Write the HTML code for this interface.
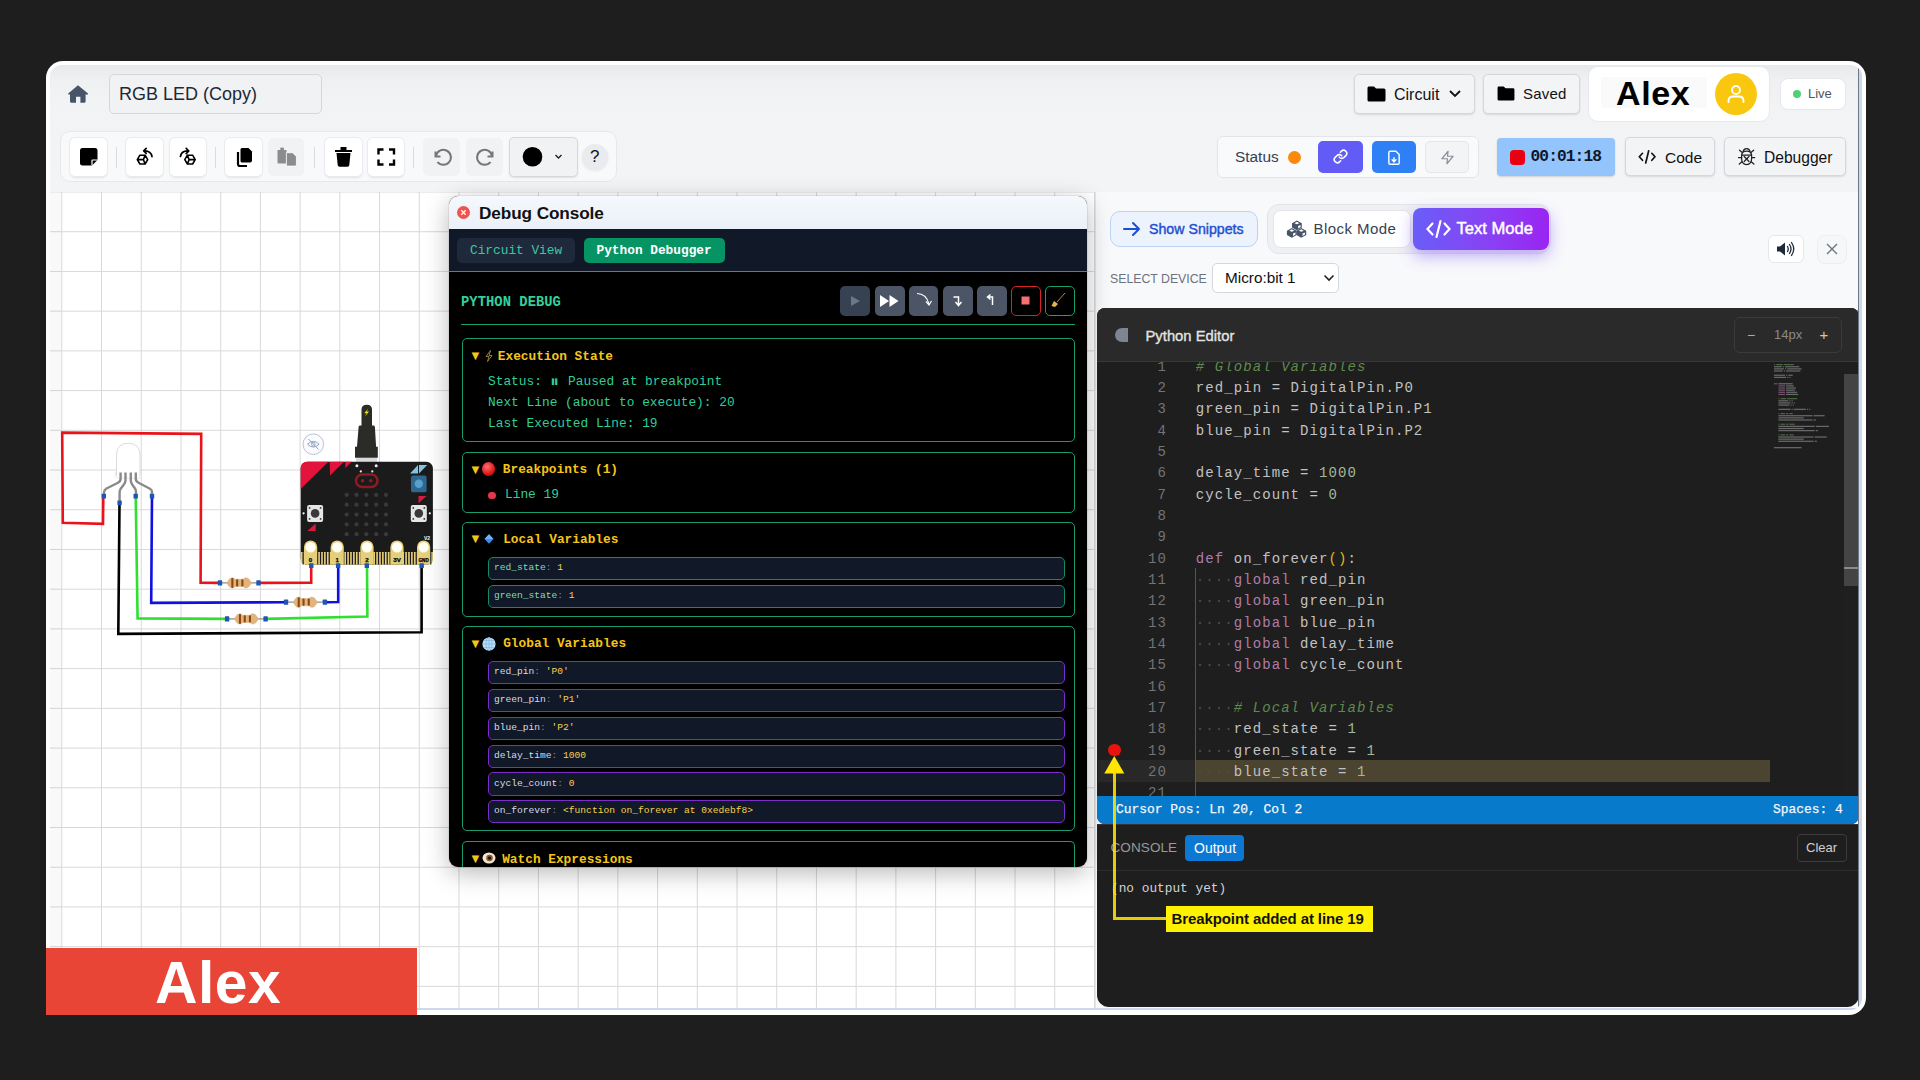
<!DOCTYPE html>
<html><head><meta charset="utf-8">
<style>
*{box-sizing:border-box;margin:0;padding:0}
html,body{width:1920px;height:1080px;overflow:hidden;background:#1e1e1e;font-family:"Liberation Sans",sans-serif}
.a{position:absolute}
.mono{font-family:"Liberation Mono",monospace}
#frame{left:46px;top:61px;width:1820px;height:954px;background:#fff;border-radius:17px}
#app{left:0;top:0;width:1920px;height:1080px;clip-path:inset(65px 58px 70px 50px round 12px 12px 12px 12px);background:#f0f1f3}
#hdr{left:50px;top:65px;width:1812px;height:127.5px;background:linear-gradient(#e8e9eb,#eff0f2 14px,#f2f3f5 40px,#f3f4f5);border-bottom:1.5px solid #cdd0d4}
.btn{position:absolute;background:#f3f4f6;border:1px solid #d4d7dc;border-radius:5px;box-shadow:0 1px 2px rgba(0,0,0,.12)}
.tb{position:absolute;background:#fff;border-radius:5px;box-shadow:0 0 0 1px #e9ebee,0 1.5px 2px rgba(0,0,0,.09)}
.sep{position:absolute;width:1px;height:21px;background:#d9dce1}
#canvas{left:50px;top:192px;width:1045px;height:818px;background-color:#fff;
 background-image:linear-gradient(to right,#d8d8d8 1.2px,transparent 1.2px),linear-gradient(to bottom,#d8d8d8 1.2px,transparent 1.2px);
 background-size:39.73px 39.73px;background-position:11.3px -0.5px}
#rp{left:1095px;top:192px;width:764px;height:818px;background:#f8f9fb;border-left:1px solid #e3e5e8}
.ln{position:absolute;left:1097px;width:70px;text-align:right;font:14px/21.33px "Liberation Mono",monospace;letter-spacing:1.08px;color:#737373}
.cl{position:absolute;left:1195.8px;font:14px/21.33px "Liberation Mono",monospace;letter-spacing:1.08px;color:#c2c2c2;white-space:pre}
.tc{color:#5f8a4d;font-style:italic}.tk{color:#ad7daa}.ty{color:#dcb81a}.td{color:#4d4d4d}.tn{color:#a3b99a}
.box{position:absolute;left:462px;width:613px;border:1.5px solid #199a70;border-radius:5px}
.tt{position:absolute;left:470px;font:700 12.8px/18px "Liberation Mono",monospace;color:#f5c518;white-space:pre}
.tri{font-size:13px;color:#f5c518;display:inline-block;width:14px}
.emo{position:absolute;border-radius:50%}
.st{position:absolute;left:488px;font:12.85px/17px "Liberation Mono",monospace;color:#2fcf9a;white-space:pre}
.vb{position:absolute;left:488px;width:577px;height:23.5px;background:#111827;border-radius:5px}
.vb.g{border:1.7px solid #168a64}.vb.p{border:1.8px solid #7b2dcc}
.vt{position:absolute;left:494px;font:9.6px/14px "Liberation Mono",monospace;white-space:pre}
.vn{color:#86dbb4}.vg{color:#dcd8e6}.vc{color:#7c8594}.vv{color:#f7d24a}
</style></head><body>
<div id="frame" class="a"></div>
<div id="app" class="a">
  <div id="hdr" class="a"></div>

  <!-- HEADER ROW 1 -->
  <svg class="a" style="left:0;top:0" width="1920" height="200" viewBox="0 0 1920 200">
    <path d="M78,85.3 L88,93.6 L88,94.6 L85.6,94.6 L85.6,101.6 Q85.6,102.7 84.5,102.7 L80.4,102.7 L80.4,96.8 L76,96.8 L76,102.7 L71.1,102.7 Q70,102.7 70,101.6 L70,94.6 L68.2,94.6 L68.2,93.6 Z" fill="#475569"/>
  </svg>
  <div class="a" style="left:109px;top:74px;width:213px;height:40px;background:#f1f2f4;border:1px solid #d3d6db;border-radius:5px"></div>
  <div class="a" style="left:119px;top:82px;font-size:18px;line-height:24px;color:#1f2937">RGB LED (Copy)</div>

  <div class="btn" style="left:1354px;top:74px;width:121px;height:40px"></div>
  <svg class="a" style="left:1367px;top:86px" width="19" height="16" viewBox="0 0 19 16"><path d="M1.5,0.5 H7 L9,2.5 H17 Q18.5,2.5 18.5,4 V14 Q18.5,15.5 17,15.5 H2 Q0.5,15.5 0.5,14 V2 Q0.5,0.5 1.5,0.5Z" fill="#000"/></svg>
  <div class="a" style="left:1394px;top:85px;font-size:16px;line-height:20px;color:#111">Circuit</div>
  <svg class="a" style="left:1449px;top:89px" width="12" height="9" viewBox="0 0 12 9"><path d="M1,2 L6,7 L11,2" stroke="#111" stroke-width="1.8" fill="none"/></svg>

  <div class="btn" style="left:1483px;top:74px;width:97px;height:40px"></div>
  <svg class="a" style="left:1497px;top:86px" width="18" height="15" viewBox="0 0 19 16"><path d="M1.5,0.5 H7 L9,2.5 H17 Q18.5,2.5 18.5,4 V14 Q18.5,15.5 17,15.5 H2 Q0.5,15.5 0.5,14 V2 Q0.5,0.5 1.5,0.5Z" fill="#000"/></svg>
  <div class="a" style="left:1523px;top:84px;font-size:15px;line-height:20px;color:#111;letter-spacing:0.2px">Saved</div>

  <div class="a" style="left:1588px;top:66px;width:182px;height:56px;background:#fff;border:1px solid #e6e8eb;border-radius:10px"></div>
  <div class="a" style="left:1601px;top:77px;width:106px;height:31px;background:#fafafa"></div>
  <div class="a" style="left:1616px;top:73px;font-size:34px;line-height:40px;font-weight:700;color:#000;letter-spacing:0.6px">Alex</div>
  <div class="a" style="left:1715px;top:73px;width:42px;height:42px;border-radius:50%;background:#f9c80e"></div>
  <svg class="a" style="left:1724px;top:82px" width="24" height="24" viewBox="0 0 24 24"><circle cx="12" cy="8" r="4" stroke="#fff" stroke-width="1.8" fill="none"/><path d="M4.5,20 V19 Q4.5,14.5 9,14.5 H15 Q19.5,14.5 19.5,19 V20" stroke="#fff" stroke-width="1.8" fill="none" stroke-linecap="round"/></svg>

  <div class="a" style="left:1780px;top:78px;width:66px;height:32px;background:#fff;border:1px solid #e5e7eb;border-radius:8px"></div>
  <div class="a" style="left:1793px;top:90px;width:8px;height:8px;border-radius:50%;background:#4fd07a"></div>
  <div class="a" style="left:1808px;top:86px;font-size:13px;line-height:16px;color:#4b5563">Live</div>

  <!-- TOOLBAR -->
  <div class="a" style="left:60px;top:131px;width:557px;height:51px;background:#f8f9fa;border:1px solid #e6e8eb;border-radius:10px"></div>
  <div class="tb" style="left:70px;top:138px;width:37px;height:38px"></div>
  <div class="sep" style="left:116px;top:147px"></div>
  <div class="tb" style="left:126px;top:138px;width:37px;height:38px"></div>
  <div class="tb" style="left:170px;top:138px;width:36px;height:38px"></div>
  <div class="sep" style="left:215px;top:147px"></div>
  <div class="tb" style="left:225px;top:138px;width:37px;height:38px"></div>
  <div class="a" style="left:268px;top:138px;width:36px;height:38px;background:#f1f2f4;border-radius:5px"></div>
  <div class="sep" style="left:314px;top:147px"></div>
  <div class="tb" style="left:325px;top:138px;width:37px;height:38px"></div>
  <div class="tb" style="left:368px;top:138px;width:36px;height:38px"></div>
  <div class="sep" style="left:413px;top:147px"></div>
  <div class="a" style="left:423px;top:138px;width:37px;height:38px;background:#f1f2f4;border-radius:5px"></div>
  <div class="a" style="left:466px;top:138px;width:37px;height:38px;background:#f1f2f4;border-radius:5px"></div>
  <div class="a" style="left:509px;top:137px;width:69px;height:40px;background:#f1f2f4;border:1px solid #d5d8dd;border-radius:5px;box-shadow:0 1px 2px rgba(0,0,0,.1)"></div>
  <div class="a" style="left:582px;top:144px;width:26px;height:26px;border-radius:50%;background:#e9ebee;box-shadow:0 1px 3px rgba(0,0,0,.08)"></div>
  <svg class="a" style="left:0;top:120px" width="640" height="80" viewBox="0 120 640 80">
    <!-- sticky note -->
    <path d="M82.5,148 H95 Q97.5,148 97.5,150.5 V160 L92,165.5 H82.5 Q80,165.5 80,163 V150.5 Q80,148 82.5,148Z" fill="#000"/>
    <path d="M97.5,160 L92.5,160 Q92,160 92,160.5 V165.5" stroke="#fff" stroke-width="1.2" fill="none"/>
    <!-- rotate left -->
    <g stroke="#000" stroke-width="1.6" fill="none" stroke-linejoin="round" stroke-linecap="round">
      <path d="M137.3,159.6 L139.9,155.2 L145.1,155.2 L147.7,159.6 L145.1,164.0 L139.9,164.0Z M137.3,159.6 L143.4,159.6 L145.1,155.2 M143.4,159.6 L145.1,164.0"/>
      <path d="M152,156.7 Q151,150.6 144,150.9 M146.2,148.4 L143.7,150.9 L146.2,153.4" stroke-width="1.7"/>
      <path d="M184.8,159.6 L187.4,155.2 L192.6,155.2 L195.2,159.6 L192.6,164.0 L187.4,164.0Z M195.2,159.6 L189.1,159.6 L187.4,155.2 M189.1,159.6 L187.4,164.0"/>
      <path d="M180.4,156.5 Q181.5,150.6 188.5,151 M186.2,148.4 L188.8,151 L186.2,153.6" stroke-width="1.7"/>
    </g>
    <!-- copy -->
    <path d="M238,152 V164 Q238,166 240,166 H247" stroke="#000" stroke-width="2.2" fill="none"/>
    <path d="M242,148 H248.5 L252,151.5 V160.5 Q252,162.5 250,162.5 H242 Q240.5,162.5 240.5,161 V149.5 Q240.5,148 242,148Z" fill="#000"/>
    <!-- paste disabled -->
    <path d="M277.5,150 H286.5 V163.6 H278.5 Q277.5,163.6 277.5,162.6Z" fill="#8c8c8c"/>
    <rect x="280.3" y="147.6" width="3.6" height="3.2" rx="1" fill="#8c8c8c"/>
    <path d="M286.4,152.7 H292.6 L296.4,156.5 V165 Q296.4,166.1 295.3,166.1 H287.5 Q286.4,166.1 286.4,165Z" fill="#8c8c8c" stroke="#fff" stroke-width="0.8"/>
    <!-- trash -->
    <path d="M335,150 H352 V152 H335Z M340.5,147 H346.5 V150 H340.5Z" fill="#000"/>
    <path d="M336.5,153 H350.5 L349.3,165 Q349.1,166.7 347.5,166.7 H339.5 Q337.9,166.7 337.7,165Z" fill="#000"/>
    <!-- fullscreen -->
    <path d="M378.5,154.5 V149.5 H383.5 M389,149.5 H394 V154.5 M394,159.5 V164.5 H389 M383.5,164.5 H378.5 V159.5" stroke="#000" stroke-width="2.4" fill="none"/>
    <!-- undo -->
    <path d="M435.5,151.5 V156.5 H440.5" stroke="#777" stroke-width="2" fill="none"/>
    <path d="M436,156 A7.5,7.5 0 1 1 437.5,162" stroke="#777" stroke-width="2" fill="none"/>
    <!-- redo -->
    <path d="M492.5,151.5 V156.5 H487.5" stroke="#777" stroke-width="2" fill="none"/>
    <path d="M492,156 A7.5,7.5 0 1 0 490.5,162" stroke="#777" stroke-width="2" fill="none"/>
    <!-- color -->
    <circle cx="532.5" cy="156.7" r="9.8" fill="#000"/>
    <path d="M555.5,155 L558.5,158 L561.5,155" stroke="#222" stroke-width="1.4" fill="none"/>
  </svg>
  <div class="a" style="left:590px;top:147px;font-size:17px;line-height:20px;color:#111">?</div>

  <!-- HEADER ROW 2 -->
  <div class="btn" style="left:1625px;top:137px;width:90px;height:39px"></div>
  <div class="btn" style="left:1724px;top:137px;width:122px;height:39px"></div>
  <div class="a" style="left:1217px;top:136px;width:262px;height:42px;background:#f9fafb;border:1px solid #e3e5e9;border-radius:6px"></div>
  <div class="a" style="left:1235px;top:147px;font-size:15.4px;line-height:20px;color:#374151">Status</div>
  <div class="a" style="left:1288px;top:150.5px;width:13px;height:13px;border-radius:50%;background:#fb8a0a"></div>
  <div class="a" style="left:1318px;top:141px;width:45px;height:32px;border-radius:5px;background:#635bf6"></div>
  <div class="a" style="left:1372px;top:141px;width:44px;height:32px;border-radius:5px;background:#2f80f7"></div>
  <div class="a" style="left:1425px;top:141px;width:44px;height:32px;border-radius:5px;background:#f3f4f6;border:1px solid #e5e7eb"></div>
  <svg class="a" style="left:0;top:120px" width="1920" height="80" viewBox="0 120 1920 80">
    <!-- code icon -->
    <path d="M1642.5,153.3 L1639.3,156.8 L1642.5,160.3 M1651.8,153.3 L1655,156.8 L1651.8,160.3 M1648.7,150.8 L1645.7,163" stroke="#111" stroke-width="1.7" fill="none" stroke-linecap="round" stroke-linejoin="round"/>
    <!-- bug icon -->
    <g stroke="#222" stroke-width="1.25" fill="none" stroke-linecap="round">
      <path d="M1741.8,155 Q1741.8,151 1746.6,151 Q1751.4,151 1751.4,155"/>
      <path d="M1743.2,151.6 Q1743.5,148.5 1746.6,148.5 Q1749.7,148.5 1750,151.6"/>
      <path d="M1741.6,155 H1751.6 V158.5 Q1751.6,164.5 1746.6,164.5 Q1741.6,164.5 1741.6,158.5Z"/>
      <path d="M1744.2,156.5 L1749,161.5 M1749,156.5 L1744.2,161.5"/>
      <path d="M1741.6,157.5 H1738.5 M1751.6,157.5 H1754.7 M1742,161.8 L1739.3,164 M1751.2,161.8 L1753.9,164 M1742.3,152.5 L1739.5,150.2 M1750.9,152.5 L1753.7,150.2"/>
    </g>
  </svg>
  <svg class="a" style="left:1333.3px;top:149.3px" width="15" height="15" viewBox="0 0 24 24"><g stroke="#fff" stroke-width="2.5" fill="none" stroke-linecap="round" stroke-linejoin="round"><path d="M10 13a5 5 0 0 0 7.54.54l3-3a5 5 0 0 0-7.07-7.07l-1.72 1.71"/><path d="M14 11a5 5 0 0 0-7.54-.54l-3 3a5 5 0 0 0 7.07 7.07l1.71-1.71"/></g></svg>
  <svg class="a" style="left:1385.5px;top:150px" width="16" height="15.5" viewBox="0 0 24 24"><g stroke="#fff" stroke-width="2.2" fill="none" stroke-linecap="round" stroke-linejoin="round"><path d="M15 2H6a2 2 0 0 0-2 2v16a2 2 0 0 0 2 2h12a2 2 0 0 0 2-2V7Z"/><path d="M12 18v-6"/><path d="m9 15 3 3 3-3"/></g></svg>
  <svg class="a" style="left:1439.5px;top:149.5px" width="15" height="15" viewBox="0 0 24 24"><polygon points="13 2 3 14 12 14 11 22 21 10 12 10 13 2" stroke="#8a8f98" stroke-width="1.9" fill="none" stroke-linejoin="round"/></svg>
  <div class="a" style="left:1497px;top:138px;width:118px;height:38px;border-radius:4px;background:#93c4fb;box-shadow:0 1px 2px rgba(0,0,0,.15)"></div>
  <div class="a" style="left:1510px;top:150px;width:15px;height:15px;border-radius:4px;background:#e80012"></div>
  <div class="a mono" style="left:1530.5px;top:146.5px;font-size:16.2px;line-height:20px;font-weight:700;color:#0f172a;letter-spacing:-0.9px">00:01:18</div>
  <div class="a" style="left:1665px;top:147.5px;font-size:15.5px;line-height:20px;color:#111">Code</div>
  <div class="a" style="left:1764px;top:148px;font-size:15.6px;line-height:20px;color:#111">Debugger</div>
  <div id="canvas" class="a"></div>
  <div class="a" style="left:50px;top:193px;width:11px;height:817px;background:rgba(0,0,0,.025)"></div>
  <div id="rp" class="a"></div>


  <!-- CIRCUIT -->
  <svg class="a" style="left:0;top:0" width="460" height="660" viewBox="0 0 460 660">
<polyline points="103.3,496 103,523.8 62.8,522.7 62.2,432.6 201.2,433.9 200.6,582.8 220,582.9" stroke="#e8141a" fill="none" stroke-width="2.6" stroke-linejoin="miter"/>
<polyline points="258.5,582.9 311.2,582.6 311.2,565.7" stroke="#e8141a" fill="none" stroke-width="2.6" stroke-linejoin="miter"/>
<polyline points="152,496 151.2,602.9 286,602.2" stroke="#1010e0" fill="none" stroke-width="2.6" stroke-linejoin="miter"/>
<polyline points="324.9,602.2 338.2,602 338.2,565.7" stroke="#1010e0" fill="none" stroke-width="2.6" stroke-linejoin="miter"/>
<polyline points="135.7,496 137.6,618.4 227.1,618.9" stroke="#30e030" fill="none" stroke-width="2.6" stroke-linejoin="miter"/>
<polyline points="265.6,618.9 367.4,616.6 367,566" stroke="#30e030" fill="none" stroke-width="2.6" stroke-linejoin="miter"/>
<polyline points="119.5,503 118.3,633.9 421.6,632.2 421.6,566" stroke="#000" fill="none" stroke-width="2.6" stroke-linejoin="miter"/>
<path d="M220,582.9 H258.5" stroke="#8c8c8c" stroke-width="1.3"/><path d="M226.6,582.9 L229.6,578.6999999999999 Q231.1,577.6 233.1,577.8 L235.1,579.3 H243.1 L245.1,577.8 Q247.1,577.6 248.6,578.6999999999999 L251.6,582.9 L248.6,587.1 Q247.1,588.1999999999999 245.1,588.0 L243.1,586.5 H235.1 L233.1,588.0 Q231.1,588.1999999999999 229.6,587.1Z" fill="#e0b47c" stroke="#e0b47c" stroke-width="0.6" stroke-linejoin="round"/><rect x="231.29999999999998" y="577.9" width="2.1" height="10" rx="0.8" fill="#8a4a12"/><rect x="236.1" y="579.3" width="2.1" height="7.2" rx="0.8" fill="#8a4a12"/><rect x="241.29999999999998" y="579.3" width="2.1" height="7.2" rx="0.8" fill="#8a4a12"/><rect x="217.8" y="580.3" width="4.4" height="5.2" rx="0.6" fill="#1f56b4"/><rect x="256.3" y="580.3" width="4.4" height="5.2" rx="0.6" fill="#1f56b4"/>
<path d="M286,602.2 H324.9" stroke="#8c8c8c" stroke-width="1.3"/><path d="M293,602.2 L296,598.0 Q297.5,596.9000000000001 299.5,597.1 L301.5,598.6 H309.0 L311.0,597.1 Q313.0,596.9000000000001 314.5,598.0 L317.5,602.2 L314.5,606.4000000000001 Q313.0,607.5 311.0,607.3000000000001 L309.0,605.8000000000001 H301.5 L299.5,607.3000000000001 Q297.5,607.5 296,606.4000000000001Z" fill="#e0b47c" stroke="#e0b47c" stroke-width="0.6" stroke-linejoin="round"/><rect x="297.7" y="597.2" width="2.1" height="10" rx="0.8" fill="#8a4a12"/><rect x="302.5" y="598.6" width="2.1" height="7.2" rx="0.8" fill="#8a4a12"/><rect x="307.7" y="598.6" width="2.1" height="7.2" rx="0.8" fill="#8a4a12"/><rect x="283.8" y="599.6" width="4.4" height="5.2" rx="0.6" fill="#1f56b4"/><rect x="322.7" y="599.6" width="4.4" height="5.2" rx="0.6" fill="#1f56b4"/>
<path d="M227.1,618.9 H265.6" stroke="#8c8c8c" stroke-width="1.3"/><path d="M234.2,618.9 L237.2,614.6999999999999 Q238.7,613.6 240.7,613.8 L242.7,615.3 H250.0 L252.0,613.8 Q254.0,613.6 255.5,614.6999999999999 L258.5,618.9 L255.5,623.1 Q254.0,624.1999999999999 252.0,624.0 L250.0,622.5 H242.7 L240.7,624.0 Q238.7,624.1999999999999 237.2,623.1Z" fill="#e0b47c" stroke="#e0b47c" stroke-width="0.6" stroke-linejoin="round"/><rect x="238.89999999999998" y="613.9" width="2.1" height="10" rx="0.8" fill="#8a4a12"/><rect x="243.7" y="615.3" width="2.1" height="7.2" rx="0.8" fill="#8a4a12"/><rect x="248.89999999999998" y="615.3" width="2.1" height="7.2" rx="0.8" fill="#8a4a12"/><rect x="224.9" y="616.3" width="4.4" height="5.2" rx="0.6" fill="#1f56b4"/><rect x="263.40000000000003" y="616.3" width="4.4" height="5.2" rx="0.6" fill="#1f56b4"/>
<path d="M116.5,476 V455 Q116.5,443.3 128.3,443.3 Q140,443.3 140,455 V476" fill="#fff" stroke="#d8d8d8" stroke-width="0.9"/>
<path d="M115.5,472 Q114,478 118,478 H138.5 Q142.5,478 141,472" fill="none" stroke="#e2e2e2" stroke-width="0.8"/>
<path d="M120.6,472.5 V479 Q120.6,481.5 117.5,483 L106.5,488.5 Q104.2,489.8 104,492 V495" stroke="#8a8a8a" stroke-width="2.4" fill="none" stroke-linecap="butt"/>
<path d="M125.5,472.5 V480.5 Q125.5,482.5 123.5,485 L120.5,489 Q119.6,490.5 119.6,492.5 V501" stroke="#8a8a8a" stroke-width="2.4" fill="none" stroke-linecap="butt"/>
<path d="M130.8,472.5 V480.5 Q130.8,482.5 132.5,485 L135,488.5 Q136,490 136,492 V495" stroke="#8a8a8a" stroke-width="2.4" fill="none" stroke-linecap="butt"/>
<path d="M135.8,472.5 V479 Q135.8,481.5 139,483 L149.5,488.5 Q152,489.8 152,492 V495" stroke="#8a8a8a" stroke-width="2.4" fill="none" stroke-linecap="butt"/>
<rect x="101.6" y="493.8" width="4.4" height="4.8" rx="0.6" fill="#1f56b4"/>
<rect x="117.39999999999999" y="500.40000000000003" width="4.4" height="4.8" rx="0.6" fill="#1f56b4"/>
<rect x="133.5" y="493.8" width="4.4" height="4.8" rx="0.6" fill="#1f56b4"/>
<rect x="149.8" y="493.8" width="4.4" height="4.8" rx="0.6" fill="#1f56b4"/>
<circle cx="313.3" cy="444.2" r="10.3" fill="#fafcff" stroke="#b6c4d8" stroke-width="1"/>
<path d="M307.5,444.2 Q313.3,438.5 319.1,444.2 Q313.3,449.9 307.5,444.2Z" fill="none" stroke="#8fa3bf" stroke-width="1"/><circle cx="313.3" cy="444.2" r="1.8" fill="none" stroke="#8fa3bf" stroke-width="0.9"/><path d="M308.5,439 L318.5,449.5" stroke="#8fa3bf" stroke-width="1"/>
<path d="M361.5,409.5 Q361.5,404.7 366.75,404.7 Q372,404.7 372,409.5 V425.6 H373.5 Q374.7,425.6 374.9,427 L376.1,446.7 H377.8 V457.8 H355 V446.7 H357 L358.6,427 Q358.8,425.6 360,425.6 H361.5Z" fill="#2b2b27"/>
<rect x="356" y="458" width="21" height="3.8" fill="#d9d9d9"/>
<path d="M368.3,408.4 L364.2,413.2 H366.6 L365,416.6 L369,411.6 H366.7Z" fill="#f7e000"/>
<rect x="300.7" y="461.8" width="132.2" height="102.7" rx="6.5" fill="#1b1b1b"/>
<path d="M307.2,461.8 H328.4 L300.7,489 V468.3 Q300.7,461.8 307.2,461.8Z" fill="#e3143c"/>
<path d="M329.7,461.8 H344 L330,475.4Z M345.3,461.8 H351.7 L345.3,468Z" fill="#e3143c"/>
<circle cx="356.9" cy="465.7" r="1.5" fill="#eee"/><circle cx="376.2" cy="465.7" r="1.5" fill="#eee"/><circle cx="360.8" cy="471.4" r="1.1" fill="#eee"/><circle cx="372.3" cy="471.4" r="1.1" fill="#eee"/>
<rect x="356" y="474.5" width="21.5" height="12.5" rx="6.25" fill="none" stroke="#8d1c22" stroke-width="2.6"/><circle cx="362.6" cy="480.8" r="1.8" fill="#8d1c22"/><circle cx="370.8" cy="480.8" r="1.8" fill="#8d1c22"/>
<circle cx="346.70" cy="494.90" r="2.1" fill="#3a3a3a"/>
<circle cx="346.70" cy="504.72" r="2.1" fill="#3a3a3a"/>
<circle cx="346.70" cy="514.54" r="2.1" fill="#3a3a3a"/>
<circle cx="346.70" cy="524.36" r="2.1" fill="#3a3a3a"/>
<circle cx="346.70" cy="534.18" r="2.1" fill="#3a3a3a"/>
<circle cx="356.52" cy="494.90" r="2.1" fill="#3a3a3a"/>
<circle cx="356.52" cy="504.72" r="2.1" fill="#3a3a3a"/>
<circle cx="356.52" cy="514.54" r="2.1" fill="#3a3a3a"/>
<circle cx="356.52" cy="524.36" r="2.1" fill="#3a3a3a"/>
<circle cx="356.52" cy="534.18" r="2.1" fill="#3a3a3a"/>
<circle cx="366.34" cy="494.90" r="2.1" fill="#3a3a3a"/>
<circle cx="366.34" cy="504.72" r="2.1" fill="#3a3a3a"/>
<circle cx="366.34" cy="514.54" r="2.1" fill="#3a3a3a"/>
<circle cx="366.34" cy="524.36" r="2.1" fill="#3a3a3a"/>
<circle cx="366.34" cy="534.18" r="2.1" fill="#3a3a3a"/>
<circle cx="376.16" cy="494.90" r="2.1" fill="#3a3a3a"/>
<circle cx="376.16" cy="504.72" r="2.1" fill="#3a3a3a"/>
<circle cx="376.16" cy="514.54" r="2.1" fill="#3a3a3a"/>
<circle cx="376.16" cy="524.36" r="2.1" fill="#3a3a3a"/>
<circle cx="376.16" cy="534.18" r="2.1" fill="#3a3a3a"/>
<circle cx="385.98" cy="494.90" r="2.1" fill="#3a3a3a"/>
<circle cx="385.98" cy="504.72" r="2.1" fill="#3a3a3a"/>
<circle cx="385.98" cy="514.54" r="2.1" fill="#3a3a3a"/>
<circle cx="385.98" cy="524.36" r="2.1" fill="#3a3a3a"/>
<circle cx="385.98" cy="534.18" r="2.1" fill="#3a3a3a"/>
<rect x="307.1" y="504.9" width="16" height="17" rx="2" fill="#e6e6e6"/><circle cx="315.1" cy="513.4" r="4.3" fill="#3a3a3a"/><circle cx="309.6" cy="507.9" r="0.9" fill="#333"/><circle cx="320.6" cy="507.9" r="0.9" fill="#333"/><circle cx="309.6" cy="518.9" r="0.9" fill="#333"/><circle cx="320.6" cy="518.9" r="0.9" fill="#333"/>
<rect x="410.8" y="504.9" width="16" height="17" rx="2" fill="#e6e6e6"/><circle cx="418.8" cy="513.4" r="4.3" fill="#3a3a3a"/><circle cx="413.3" cy="507.9" r="0.9" fill="#333"/><circle cx="424.3" cy="507.9" r="0.9" fill="#333"/><circle cx="413.3" cy="518.9" r="0.9" fill="#333"/><circle cx="424.3" cy="518.9" r="0.9" fill="#333"/>
<circle cx="303.6" cy="513.3" r="1.1" fill="#fff"/><circle cx="429.8" cy="513.3" r="1.1" fill="#fff"/>
<path d="M410,473.5 L418,465 V473.5Z M419,473.5 L427.2,465 H419Z" fill="#7ec4e6"/>
<rect x="411" y="475.4" width="15.6" height="16.9" rx="2" fill="#2d6890"/><circle cx="418.8" cy="483.8" r="4.2" fill="#5a9fcb"/>
<path d="M418.5,503.3 L426.6,495.9 H418.5Z" fill="#d41a3f"/>
<path d="M307.3,531 L315.7,523.6 V531Z" fill="#d41a3f"/>
<text x="424" y="539.5" font-size="5" font-weight="700" fill="#fff" font-family="Liberation Sans">V2</text>
<path d="M300.7,552.1 H432.9 V559.5 Q432.9,564.5 427.9,564.5 H305.7 Q300.7,564.5 300.7,559.5Z" fill="#e6cf7a"/>
<rect x="302.50" y="552.1" width="1.25" height="12.4" fill="#1b1b1b"/><rect x="305.40" y="552.1" width="1.25" height="12.4" fill="#1b1b1b"/><rect x="308.30" y="552.1" width="1.25" height="12.4" fill="#1b1b1b"/><rect x="311.20" y="552.1" width="1.25" height="12.4" fill="#1b1b1b"/><rect x="314.10" y="552.1" width="1.25" height="12.4" fill="#1b1b1b"/><rect x="317.00" y="552.1" width="1.25" height="12.4" fill="#1b1b1b"/><rect x="319.90" y="552.1" width="1.25" height="12.4" fill="#1b1b1b"/><rect x="322.80" y="552.1" width="1.25" height="12.4" fill="#1b1b1b"/><rect x="325.70" y="552.1" width="1.25" height="12.4" fill="#1b1b1b"/><rect x="328.60" y="552.1" width="1.25" height="12.4" fill="#1b1b1b"/><rect x="331.50" y="552.1" width="1.25" height="12.4" fill="#1b1b1b"/><rect x="334.40" y="552.1" width="1.25" height="12.4" fill="#1b1b1b"/><rect x="337.30" y="552.1" width="1.25" height="12.4" fill="#1b1b1b"/><rect x="340.20" y="552.1" width="1.25" height="12.4" fill="#1b1b1b"/><rect x="343.10" y="552.1" width="1.25" height="12.4" fill="#1b1b1b"/><rect x="346.00" y="552.1" width="1.25" height="12.4" fill="#1b1b1b"/><rect x="348.90" y="552.1" width="1.25" height="12.4" fill="#1b1b1b"/><rect x="351.80" y="552.1" width="1.25" height="12.4" fill="#1b1b1b"/><rect x="354.70" y="552.1" width="1.25" height="12.4" fill="#1b1b1b"/><rect x="357.60" y="552.1" width="1.25" height="12.4" fill="#1b1b1b"/><rect x="360.50" y="552.1" width="1.25" height="12.4" fill="#1b1b1b"/><rect x="363.40" y="552.1" width="1.25" height="12.4" fill="#1b1b1b"/><rect x="366.30" y="552.1" width="1.25" height="12.4" fill="#1b1b1b"/><rect x="369.20" y="552.1" width="1.25" height="12.4" fill="#1b1b1b"/><rect x="372.10" y="552.1" width="1.25" height="12.4" fill="#1b1b1b"/><rect x="375.00" y="552.1" width="1.25" height="12.4" fill="#1b1b1b"/><rect x="377.90" y="552.1" width="1.25" height="12.4" fill="#1b1b1b"/><rect x="380.80" y="552.1" width="1.25" height="12.4" fill="#1b1b1b"/><rect x="383.70" y="552.1" width="1.25" height="12.4" fill="#1b1b1b"/><rect x="386.60" y="552.1" width="1.25" height="12.4" fill="#1b1b1b"/><rect x="389.50" y="552.1" width="1.25" height="12.4" fill="#1b1b1b"/><rect x="392.40" y="552.1" width="1.25" height="12.4" fill="#1b1b1b"/><rect x="395.30" y="552.1" width="1.25" height="12.4" fill="#1b1b1b"/><rect x="398.20" y="552.1" width="1.25" height="12.4" fill="#1b1b1b"/><rect x="401.10" y="552.1" width="1.25" height="12.4" fill="#1b1b1b"/><rect x="404.00" y="552.1" width="1.25" height="12.4" fill="#1b1b1b"/><rect x="406.90" y="552.1" width="1.25" height="12.4" fill="#1b1b1b"/><rect x="409.80" y="552.1" width="1.25" height="12.4" fill="#1b1b1b"/><rect x="412.70" y="552.1" width="1.25" height="12.4" fill="#1b1b1b"/><rect x="415.60" y="552.1" width="1.25" height="12.4" fill="#1b1b1b"/><rect x="418.50" y="552.1" width="1.25" height="12.4" fill="#1b1b1b"/><rect x="421.40" y="552.1" width="1.25" height="12.4" fill="#1b1b1b"/><rect x="424.30" y="552.1" width="1.25" height="12.4" fill="#1b1b1b"/><rect x="427.20" y="552.1" width="1.25" height="12.4" fill="#1b1b1b"/><rect x="430.10" y="552.1" width="1.25" height="12.4" fill="#1b1b1b"/>
<path d="M304.0,547 A6.6,6.6 0 0 1 317.20000000000005,547 V564.5 H304.0Z" fill="#e6cf7a"/>
<circle cx="310.6" cy="547.3" r="5.2" fill="#fffdf4"/>
<text x="310.6" y="561.6" font-size="6.2" font-weight="700" text-anchor="middle" fill="#000" stroke="#000" stroke-width="0.25" font-family="Liberation Sans">0</text>
<path d="M330.59999999999997,547 A6.6,6.6 0 0 1 343.8,547 V564.5 H330.59999999999997Z" fill="#e6cf7a"/>
<circle cx="337.2" cy="547.3" r="5.2" fill="#fffdf4"/>
<text x="337.2" y="561.6" font-size="6.2" font-weight="700" text-anchor="middle" fill="#000" stroke="#000" stroke-width="0.25" font-family="Liberation Sans">1</text>
<path d="M360.4,547 A6.6,6.6 0 0 1 373.6,547 V564.5 H360.4Z" fill="#e6cf7a"/>
<circle cx="367" cy="547.3" r="5.2" fill="#fffdf4"/>
<text x="367" y="561.6" font-size="6.2" font-weight="700" text-anchor="middle" fill="#000" stroke="#000" stroke-width="0.25" font-family="Liberation Sans">2</text>
<path d="M390.4,547 A6.6,6.6 0 0 1 403.6,547 V564.5 H390.4Z" fill="#e6cf7a"/>
<circle cx="397" cy="547.3" r="5.2" fill="#fffdf4"/>
<text x="397" y="561.6" font-size="6.2" font-weight="700" text-anchor="middle" fill="#000" stroke="#000" stroke-width="0.25" font-family="Liberation Sans">3V</text>
<path d="M417.0,547 A6.6,6.6 0 0 1 430.20000000000005,547 V564.5 H417.0Z" fill="#e6cf7a"/>
<circle cx="423.6" cy="547.3" r="5.2" fill="#fffdf4"/>
<text x="423.6" y="561.6" font-size="4.6" font-weight="700" text-anchor="middle" fill="#000" stroke="#000" stroke-width="0.25" font-family="Liberation Sans">GND</text>
<rect x="309.1" y="563.2" width="4.4" height="4.8" rx="0.6" fill="#1f56b4"/>
<rect x="335.90000000000003" y="563.2" width="4.4" height="4.8" rx="0.6" fill="#1f56b4"/>
<rect x="364.6" y="563.2" width="4.4" height="4.8" rx="0.6" fill="#1f56b4"/>
<rect x="419.5" y="563.2" width="4.4" height="4.8" rx="0.6" fill="#1f56b4"/>
  </svg>
  <!-- DEBUG CONSOLE -->
  <div class="a" style="left:449px;top:195.5px;width:638px;height:671px;border-radius:9px;background:#000;box-shadow:0 6px 24px rgba(0,0,0,.28),0 0 0 1px rgba(0,0,0,.06)"></div>
  <div class="a" style="left:449px;top:195.5px;width:638px;height:34px;border-radius:9px 9px 0 0;background:linear-gradient(#f5f8fc,#eaf0f8)"></div>
  <div class="a" style="left:457px;top:206.2px;width:13px;height:13px;border-radius:50%;background:#ef5350"></div>
  <svg class="a" style="left:457px;top:206.2px" width="13" height="13" viewBox="0 0 13 13"><path d="M4.3,4.3 L8.7,8.7 M8.7,4.3 L4.3,8.7" stroke="#fff" stroke-width="1.3"/></svg>
  <div class="a" style="left:479px;top:202px;font-size:17.2px;line-height:22px;font-weight:700;color:#111;letter-spacing:-0.1px">Debug Console</div>
  <div class="a" style="left:449px;top:229px;width:638px;height:43px;background:#111827;border-bottom:1.5px solid #17a673"></div>
  <div class="a" style="left:457px;top:238px;width:118px;height:25px;border-radius:5px;background:#1e293b"></div>
  <div class="a mono" style="left:470px;top:242px;font-size:12.8px;line-height:17px;color:#3fc8a0">Circuit View</div>
  <div class="a" style="left:583.5px;top:238px;width:141px;height:25px;border-radius:5px;background:#069465"></div>
  <div class="a mono" style="left:596.5px;top:242px;font-size:12.8px;line-height:17px;font-weight:700;color:#fff">Python Debugger</div>

  <div class="a mono" style="left:461px;top:293.5px;font-size:13.8px;line-height:17px;font-weight:700;color:#33d19a;letter-spacing:0.05px">PYTHON DEBUG</div>
  <div class="a" style="left:840px;top:286px;width:30px;height:30px;border-radius:5px;background:#364152"></div>
  <div class="a" style="left:875px;top:286px;width:29.5px;height:30px;border-radius:5px;background:#4b5565"></div>
  <div class="a" style="left:909px;top:286px;width:29px;height:30px;border-radius:5px;background:#4b5565"></div>
  <div class="a" style="left:943px;top:286px;width:30px;height:30px;border-radius:5px;background:#4b5565"></div>
  <div class="a" style="left:977px;top:286px;width:30px;height:30px;border-radius:5px;background:#4b5565"></div>
  <div class="a" style="left:1011px;top:286px;width:30px;height:30px;border-radius:5px;border:1.5px solid #d42424"></div>
  <div class="a" style="left:1045px;top:286px;width:30px;height:30px;border-radius:5px;border:1.5px solid #16a06c"></div>
  <svg class="a" style="left:830px;top:280px" width="260" height="45" viewBox="830 280 260 45">
    <path d="M851,296 L860,301 L851,306Z" fill="#6b7686"/>
    <path d="M880,295 L889,301 L880,307Z M889.5,295 L898.5,301 L889.5,307Z" fill="#fff"/>
    <path d="M917,293.5 Q926,293.5 929,304" stroke="#fff" stroke-width="1.2" fill="none"/><path d="M926,301.5 L929,305 L931.5,301" stroke="#fff" stroke-width="1.2" fill="none"/>
    <path d="M953.5,297 H958.5 V305 M955.5,302 L958.5,305.5 L961.5,302" stroke="#fff" stroke-width="1.5" fill="none"/>
    <path d="M992.5,305 V297 H988 M990.5,294.5 L987.5,297 L990.5,299.5" stroke="#fff" stroke-width="1.5" fill="none"/>
    <rect x="1021.5" y="296.5" width="8" height="8" fill="#f87171"/>
    <path d="M1065,293 L1057,302" stroke="#b08a3e" stroke-width="1"/><path d="M1054,301 L1058,304 L1055,307 L1051.5,306 Z" fill="#e0b94a"/>
  </svg>
  <div class="a" style="left:461px;top:323.5px;width:614px;height:1.5px;background:#16a06c"></div>

  <div class="box" style="top:338px;height:104px"></div>
  <div class="a" style="left:469px;top:347.4px;font-size:13px;line-height:18px;color:#f5c518">▼</div><svg class="a" style="left:484px;top:350px" width="10" height="12" viewBox="0 0 10 12"><path d="M6.5,0.5 L2,6.5 H5 L3.5,11.5 L8,5.5 H5Z" fill="none" stroke="#a08a3a" stroke-width="0.9"/></svg><div class="tt" style="top:347.9px;left:497.8px">Execution State</div>
  <div class="st" style="top:373px">Status: <b style="font-size:8px;letter-spacing:-1.5px;position:relative;top:-1px;padding:0 3px 0 1px">❚❚</b> Paused at breakpoint</div>
  <div class="st" style="top:394.2px">Next Line (about to execute): 20</div>
  <div class="st" style="top:415.4px">Last Executed Line: 19</div>

  <div class="box" style="top:451.5px;height:61px"></div>
  <div class="a" style="left:469px;top:460.9px;font-size:13px;line-height:18px;color:#f5c518">▼</div><div class="a" style="left:481.8px;top:462.2px;width:13.5px;height:13.5px;border-radius:50%;background:radial-gradient(circle at 40% 35%,#ff7070,#d80f0f 65%,#a00 100%)"></div><div class="tt" style="top:461.4px;left:502.8px">Breakpoints (1)</div>
  <div class="a" style="left:488px;top:491.5px;width:7.5px;height:7.5px;border-radius:50%;background:#e8364a"></div>
  <div class="st" style="top:486px;left:505px">Line 19</div>

  <div class="box" style="top:521.5px;height:95.5px"></div>
  <div class="a" style="left:469px;top:530.3px;font-size:13px;line-height:18px;color:#f5c518">▼</div><svg class="a" style="left:484px;top:533.5px" width="10" height="10" viewBox="0 0 10 10"><path d="M5,0.3 L9.5,5 L5,9.7 L0.5,5Z" fill="#3d8bf0"/><path d="M5,0.3 L9.5,5 L5,5 L0.5,5Z" fill="#6fb0ff"/></svg><div class="tt" style="top:530.8px;left:503.2px">Local Variables</div>
  <div class="vb g" style="top:556.5px"></div><div class="vt" style="top:561px"><span class="vn">red_state</span><span class="vc">: </span><span class="vv">1</span></div>
  <div class="vb g" style="top:584.5px"></div><div class="vt" style="top:589px"><span class="vn">green_state</span><span class="vc">: </span><span class="vv">1</span></div>

  <div class="box" style="top:626px;height:205px"></div>
  <div class="a" style="left:469px;top:634.7px;font-size:13px;line-height:18px;color:#f5c518">▼</div><svg class="a" style="left:481.8px;top:636.5px" width="14" height="14" viewBox="0 0 14 14"><circle cx="7" cy="7" r="6.6" fill="#b9dcf7"/><path d="M0.6,7 H13.4 M7,0.4 V13.6 M2,3.5 H12 M2,10.5 H12" stroke="#7fb2dc" stroke-width="0.7" fill="none"/><ellipse cx="7" cy="7" rx="3" ry="6.6" stroke="#7fb2dc" stroke-width="0.7" fill="none"/></svg><div class="tt" style="top:635.2px;left:503.2px">Global Variables</div>
  <div class="vb p" style="top:660.8px"></div><div class="vt" style="top:665.3px"><span class="vg">red_pin</span><span class="vc">: </span><span class="vv">'P0'</span></div>
  <div class="vb p" style="top:688.7px"></div><div class="vt" style="top:693.2px"><span class="vg">green_pin</span><span class="vc">: </span><span class="vv">'P1'</span></div>
  <div class="vb p" style="top:716.6px"></div><div class="vt" style="top:721.1px"><span class="vg">blue_pin</span><span class="vc">: </span><span class="vv">'P2'</span></div>
  <div class="vb p" style="top:744.6px"></div><div class="vt" style="top:749.1px"><span class="vg">delay_time</span><span class="vc">: </span><span class="vv">1000</span></div>
  <div class="vb p" style="top:772.3px"></div><div class="vt" style="top:776.8px"><span class="vg">cycle_count</span><span class="vc">: </span><span class="vv">0</span></div>
  <div class="vb p" style="top:799.8px"></div><div class="vt" style="top:804.3px"><span class="vg">on_forever</span><span class="vc">: </span><span class="vv">&lt;function on_forever at 0xedebf8&gt;</span></div>

  <div class="box" style="top:840.7px;height:26.5px;border-bottom:none;border-radius:5px 5px 0 0"></div>
  <div class="a" style="left:469px;top:850.3px;font-size:13px;line-height:18px;color:#f5c518">▼</div><svg class="a" style="left:482px;top:852px" width="14" height="12" viewBox="0 0 14 12"><ellipse cx="7" cy="6" rx="6.5" ry="5.5" fill="#efe4d6"/><circle cx="7.5" cy="6" r="3.3" fill="#8a5a2a"/><circle cx="7.5" cy="6" r="1.6" fill="#1a0d05"/></svg><div class="tt" style="top:850.8px;left:502.2px">Watch Expressions</div>
  <div class="a" style="left:449px;top:866.7px;width:638px;height:20px;background:transparent"></div>
  <!-- RIGHT PANEL -->
  <div class="a" style="left:1110px;top:211px;width:148px;height:36px;background:#edf3fd;border:1px solid #bcd2f3;border-radius:10px"></div>
  <svg class="a" style="left:1122px;top:220px" width="20" height="18" viewBox="0 0 20 18"><path d="M2,9 H17 M11,3 L17,9 L11,15" stroke="#1d4ed8" stroke-width="2" fill="none" stroke-linecap="round" stroke-linejoin="round"/></svg>
  <div class="a" style="left:1149px;top:220px;font-size:14.2px;line-height:18px;color:#1e4fd0;-webkit-text-stroke:0.4px #1e4fd0">Show Snippets</div>

  <div class="a" style="left:1267px;top:204px;width:284px;height:50px;background:#eef0f3;border:1px solid #e2e4e8;border-radius:12px"></div>
  <div class="a" style="left:1273px;top:210px;width:138px;height:38px;background:#fff;border:1px solid #e3e5e9;border-radius:8px"></div>
  <svg class="a" style="left:1280px;top:212px" width="40" height="34" viewBox="1280 212 40 34"><path d="M1296.90,220.60 L1301.80,223.19 L1301.80,227.61 L1296.90,230.20 L1292.00,227.61 L1292.00,223.19Z" fill="#475569"/><path d="M1296.90,221.85 L1299.35,223.14 L1296.90,224.25 L1294.45,223.14Z" fill="#fff"/><path d="M1298.12,226.00 L1300.58,224.90 L1300.58,227.10 L1298.12,228.40Z" fill="#fff"/><path d="M1291.80,228.10 L1296.70,230.69 L1296.70,235.11 L1291.80,237.70 L1286.90,235.11 L1286.90,230.69Z" fill="#475569"/><path d="M1291.80,229.35 L1294.25,230.64 L1291.80,231.75 L1289.35,230.64Z" fill="#fff"/><path d="M1293.03,233.50 L1295.47,232.40 L1295.47,234.60 L1293.03,235.90Z" fill="#fff"/><path d="M1301.30,228.10 L1306.20,230.69 L1306.20,235.11 L1301.30,237.70 L1296.40,235.11 L1296.40,230.69Z" fill="#475569"/><path d="M1301.30,229.35 L1303.75,230.64 L1301.30,231.75 L1298.85,230.64Z" fill="#fff"/><path d="M1302.53,233.50 L1304.97,232.40 L1304.97,234.60 L1302.53,235.90Z" fill="#fff"/></svg>
  <div class="a" style="left:1313.5px;top:219px;font-size:15px;line-height:20px;color:#374151;letter-spacing:0.45px">Block Mode</div>
  <div class="a" style="left:1413px;top:208px;width:136px;height:42px;border-radius:8px;background:linear-gradient(90deg,#6a5ef8,#8b3ff4 60%,#9a24f2);box-shadow:0 6px 16px rgba(120,70,240,.45)"></div>
  <svg class="a" style="left:1426px;top:219px" width="25" height="20" viewBox="0 0 25 20"><path d="M6.5,4.5 L1.5,10 L6.5,15.5 M18.5,4.5 L23.5,10 L18.5,15.5 M14.5,2 L10.5,18" stroke="#fff" stroke-width="2.2" fill="none" stroke-linecap="round"/></svg>
  <div class="a" style="left:1456.5px;top:219px;font-size:16.6px;line-height:20px;color:#fff;-webkit-text-stroke:0.45px #fff">Text Mode</div>

  <div class="a" style="left:1768px;top:235px;width:36px;height:28px;background:#fff;border:1px solid #e5e7eb;border-radius:6px"></div>
  <svg class="a" style="left:1776px;top:241px" width="20" height="16" viewBox="0 0 20 16"><path d="M1,5.5 H4 L9,1.5 V14.5 L4,10.5 H1Z" fill="#1e293b"/><path d="M11.5,5.5 Q13,8 11.5,10.5 M13.5,3.5 Q16.5,8 13.5,12.5 M15.5,1.5 Q20,8 15.5,14.5" stroke="#1e293b" stroke-width="1.3" fill="none" stroke-linecap="round"/></svg>
  <div class="a" style="left:1817px;top:235px;width:30px;height:29px;background:#f6f7f9;border:1px solid #eceef1;border-radius:8px"></div>
  <svg class="a" style="left:1826px;top:243px" width="12" height="12" viewBox="0 0 12 12"><path d="M1,1 L11,11 M11,1 L1,11" stroke="#6b7280" stroke-width="1.4"/></svg>

  <div class="a" style="left:1110px;top:271px;font-size:12.3px;line-height:16px;color:#6b7280">SELECT DEVICE</div>
  <div class="a" style="left:1212px;top:263px;width:127px;height:30px;background:#fff;border:1px solid #d4d7dc;border-radius:5px"></div>
  <div class="a" style="left:1225px;top:269px;font-size:15.3px;line-height:18px;color:#111">Micro:bit 1</div>
  <svg class="a" style="left:1323px;top:274px" width="12" height="8" viewBox="0 0 12 8"><path d="M1.5,1.5 L6,6 L10.5,1.5" stroke="#222" stroke-width="1.6" fill="none"/></svg>

  <!-- EDITOR -->
  <div class="a" id="ed" style="left:1097px;top:308px;width:761.5px;height:516px;background:#1e1e1e;border-radius:8px"></div>
  <div class="a" style="left:1097px;top:824px;width:761.5px;height:183px;background:#1e1e1e;border-radius:0 0 12px 12px"></div>
  <div class="a" style="left:1097px;top:308px;width:762px;height:54px;background:#2a2a2a;border-radius:8px 8px 0 0;border-bottom:1px solid #383838"></div>
  <div class="a" style="left:1115px;top:328px;width:13px;height:14px;background:#7c8591;border-radius:7px 0 0 7px"></div>
  <div class="a" style="left:1145.5px;top:326px;font-size:14.8px;line-height:20px;color:#e3e3e3;-webkit-text-stroke:0.35px #e3e3e3">Python Editor</div>
  <div class="a" style="left:1734px;top:317px;width:108px;height:36px;border:1px solid #3b3b3b;border-radius:6px"></div>
  <div class="a" style="left:1747px;top:325px;font-size:14px;line-height:20px;color:#aaa">−</div>
  <div class="a" style="left:1774px;top:326px;font-size:13px;line-height:18px;color:#8a8a8a">14px</div>
  <div class="a" style="left:1819.5px;top:325px;font-size:15px;line-height:20px;color:#c8c8c8">+</div>

  <div class="a" style="left:1097px;top:362px;width:762px;height:434px;overflow:hidden" id="code">
    <div class="a" style="left:1px;top:398px;width:97px;height:21.5px;background:#282828"></div>
    <div class="a" style="left:99px;top:398px;width:574px;height:21.5px;background:#4a4430"></div>
    <div class="a" style="left:98px;top:206px;width:1px;height:240px;background:#555"></div>
    <div class="a" style="left:-1097px;top:-362px;width:1920px;height:1080px">
<div class="ln" style="top:356.70px">1</div>
<div class="cl" style="top:356.70px"><span class="tc"># Global Variables</span></div>
<div class="ln" style="top:378.03px">2</div>
<div class="cl" style="top:378.03px"><span class="ti">red_pin = DigitalPin.P0</span></div>
<div class="ln" style="top:399.36px">3</div>
<div class="cl" style="top:399.36px"><span class="ti">green_pin = DigitalPin.P1</span></div>
<div class="ln" style="top:420.69px">4</div>
<div class="cl" style="top:420.69px"><span class="ti">blue_pin = DigitalPin.P2</span></div>
<div class="ln" style="top:442.02px">5</div>
<div class="ln" style="top:463.35px">6</div>
<div class="cl" style="top:463.35px"><span class="ti">delay_time = </span><span class="tn">1000</span></div>
<div class="ln" style="top:484.68px">7</div>
<div class="cl" style="top:484.68px"><span class="ti">cycle_count = </span><span class="tn">0</span></div>
<div class="ln" style="top:506.01px">8</div>
<div class="ln" style="top:527.34px">9</div>
<div class="ln" style="top:548.67px">10</div>
<div class="cl" style="top:548.67px"><span class="tk">def</span><span class="ti"> on_forever</span><span class="ty">()</span><span class="ti">:</span></div>
<div class="ln" style="top:570.00px">11</div>
<div class="cl" style="top:570.00px"><span class="td">····</span><span class="tk">global</span><span class="ti"> red_pin</span></div>
<div class="ln" style="top:591.33px">12</div>
<div class="cl" style="top:591.33px"><span class="td">····</span><span class="tk">global</span><span class="ti"> green_pin</span></div>
<div class="ln" style="top:612.66px">13</div>
<div class="cl" style="top:612.66px"><span class="td">····</span><span class="tk">global</span><span class="ti"> blue_pin</span></div>
<div class="ln" style="top:633.99px">14</div>
<div class="cl" style="top:633.99px"><span class="td">····</span><span class="tk">global</span><span class="ti"> delay_time</span></div>
<div class="ln" style="top:655.32px">15</div>
<div class="cl" style="top:655.32px"><span class="td">····</span><span class="tk">global</span><span class="ti"> cycle_count</span></div>
<div class="ln" style="top:676.65px">16</div>
<div class="ln" style="top:697.98px">17</div>
<div class="cl" style="top:697.98px"><span class="td">····</span><span class="tc"># Local Variables</span></div>
<div class="ln" style="top:719.31px">18</div>
<div class="cl" style="top:719.31px"><span class="td">····</span><span class="ti">red_state = </span><span class="tn">1</span></div>
<div class="ln" style="top:740.64px">19</div>
<div class="cl" style="top:740.64px"><span class="td">····</span><span class="ti">green_state = </span><span class="tn">1</span></div>
<div class="ln" style="top:761.97px">20</div>
<div class="cl" style="top:761.97px"><span class="td">····</span><span class="ti">blue_state = </span><span class="tn">1</span></div>
<div class="ln" style="top:783.30px">21</div>
    </div>
    <div class="a" style="left:747px;top:1px;width:15px;height:433px;background:#1f1f1f"></div>
    <div class="a" style="left:747px;top:12px;width:14px;height:212px;background:#444"></div>
    <div class="a" style="left:747px;top:205px;width:14px;height:2px;background:#8a8a8a"></div>
  </div>
  <svg class="a" style="left:1774px;top:363px" width="66" height="90" viewBox="0 0 66 90" id="minimap"><rect x="0.00" y="1.00" width="1.10" height="1.2" fill="#6a9955" opacity="0.6"/><rect x="2.20" y="1.00" width="6.60" height="1.2" fill="#6a9955" opacity="0.6"/><rect x="9.90" y="1.00" width="9.90" height="1.2" fill="#6a9955" opacity="0.6"/><rect x="0.00" y="3.13" width="7.70" height="1.2" fill="#b8b8b8" opacity="0.5"/><rect x="8.80" y="3.13" width="1.10" height="1.2" fill="#b8b8b8" opacity="0.5"/><rect x="11.00" y="3.13" width="14.30" height="1.2" fill="#b8b8b8" opacity="0.5"/><rect x="0.00" y="5.26" width="9.90" height="1.2" fill="#b8b8b8" opacity="0.5"/><rect x="11.00" y="5.26" width="1.10" height="1.2" fill="#b8b8b8" opacity="0.5"/><rect x="13.20" y="5.26" width="14.30" height="1.2" fill="#b8b8b8" opacity="0.5"/><rect x="0.00" y="7.39" width="8.80" height="1.2" fill="#b8b8b8" opacity="0.5"/><rect x="9.90" y="7.39" width="1.10" height="1.2" fill="#b8b8b8" opacity="0.5"/><rect x="12.10" y="7.39" width="14.30" height="1.2" fill="#b8b8b8" opacity="0.5"/><rect x="0.00" y="11.65" width="11.00" height="1.2" fill="#b8b8b8" opacity="0.5"/><rect x="12.10" y="11.65" width="1.10" height="1.2" fill="#b8b8b8" opacity="0.5"/><rect x="14.30" y="11.65" width="4.40" height="1.2" fill="#b8b8b8" opacity="0.5"/><rect x="0.00" y="13.78" width="12.10" height="1.2" fill="#b8b8b8" opacity="0.5"/><rect x="13.20" y="13.78" width="1.10" height="1.2" fill="#b8b8b8" opacity="0.5"/><rect x="15.40" y="13.78" width="1.10" height="1.2" fill="#b8b8b8" opacity="0.5"/><rect x="0.00" y="20.17" width="3.30" height="1.2" fill="#c586c0" opacity="0.5"/><rect x="4.40" y="20.17" width="14.30" height="1.2" fill="#b8b8b8" opacity="0.5"/><rect x="4.40" y="22.30" width="6.60" height="1.2" fill="#c586c0" opacity="0.5"/><rect x="12.10" y="22.30" width="7.70" height="1.2" fill="#b8b8b8" opacity="0.5"/><rect x="4.40" y="24.43" width="6.60" height="1.2" fill="#c586c0" opacity="0.5"/><rect x="12.10" y="24.43" width="9.90" height="1.2" fill="#b8b8b8" opacity="0.5"/><rect x="4.40" y="26.56" width="6.60" height="1.2" fill="#c586c0" opacity="0.5"/><rect x="12.10" y="26.56" width="8.80" height="1.2" fill="#b8b8b8" opacity="0.5"/><rect x="4.40" y="28.69" width="6.60" height="1.2" fill="#c586c0" opacity="0.5"/><rect x="12.10" y="28.69" width="11.00" height="1.2" fill="#b8b8b8" opacity="0.5"/><rect x="4.40" y="30.82" width="6.60" height="1.2" fill="#c586c0" opacity="0.5"/><rect x="12.10" y="30.82" width="12.10" height="1.2" fill="#b8b8b8" opacity="0.5"/><rect x="4.40" y="35.08" width="1.10" height="1.2" fill="#6a9955" opacity="0.6"/><rect x="6.60" y="35.08" width="5.50" height="1.2" fill="#6a9955" opacity="0.6"/><rect x="13.20" y="35.08" width="9.90" height="1.2" fill="#6a9955" opacity="0.6"/><rect x="4.40" y="37.21" width="9.90" height="1.2" fill="#b8b8b8" opacity="0.5"/><rect x="15.40" y="37.21" width="1.10" height="1.2" fill="#b8b8b8" opacity="0.5"/><rect x="17.60" y="37.21" width="1.10" height="1.2" fill="#b8b8b8" opacity="0.5"/><rect x="4.40" y="39.34" width="12.10" height="1.2" fill="#b8b8b8" opacity="0.5"/><rect x="17.60" y="39.34" width="1.10" height="1.2" fill="#b8b8b8" opacity="0.5"/><rect x="19.80" y="39.34" width="1.10" height="1.2" fill="#b8b8b8" opacity="0.5"/><rect x="4.40" y="41.47" width="11.00" height="1.2" fill="#b8b8b8" opacity="0.5"/><rect x="16.50" y="41.47" width="1.10" height="1.2" fill="#b8b8b8" opacity="0.5"/><rect x="18.70" y="41.47" width="1.10" height="1.2" fill="#b8b8b8" opacity="0.5"/><rect x="4.40" y="45.73" width="12.10" height="1.2" fill="#b8b8b8" opacity="0.5"/><rect x="17.60" y="45.73" width="1.10" height="1.2" fill="#b8b8b8" opacity="0.5"/><rect x="19.80" y="45.73" width="12.10" height="1.2" fill="#b8b8b8" opacity="0.5"/><rect x="33.00" y="45.73" width="1.10" height="1.2" fill="#b8b8b8" opacity="0.5"/><rect x="35.20" y="45.73" width="1.10" height="1.2" fill="#b8b8b8" opacity="0.5"/><rect x="4.40" y="49.99" width="1.10" height="1.2" fill="#6a9955" opacity="0.6"/><rect x="6.60" y="49.99" width="4.40" height="1.2" fill="#6a9955" opacity="0.6"/><rect x="12.10" y="49.99" width="2.20" height="1.2" fill="#6a9955" opacity="0.6"/><rect x="15.40" y="49.99" width="3.30" height="1.2" fill="#6a9955" opacity="0.6"/><rect x="4.40" y="52.12" width="34.10" height="1.2" fill="#b8b8b8" opacity="0.5"/><rect x="39.60" y="52.12" width="11.00" height="1.2" fill="#b8b8b8" opacity="0.5"/><rect x="4.40" y="54.25" width="25.30" height="1.2" fill="#b8b8b8" opacity="0.5"/><rect x="4.40" y="56.38" width="34.10" height="1.2" fill="#b8b8b8" opacity="0.5"/><rect x="39.60" y="56.38" width="2.20" height="1.2" fill="#b8b8b8" opacity="0.5"/><rect x="4.40" y="60.64" width="1.10" height="1.2" fill="#6a9955" opacity="0.6"/><rect x="6.60" y="60.64" width="4.40" height="1.2" fill="#6a9955" opacity="0.6"/><rect x="12.10" y="60.64" width="2.20" height="1.2" fill="#6a9955" opacity="0.6"/><rect x="15.40" y="60.64" width="5.50" height="1.2" fill="#6a9955" opacity="0.6"/><rect x="4.40" y="62.77" width="36.30" height="1.2" fill="#b8b8b8" opacity="0.5"/><rect x="41.80" y="62.77" width="13.20" height="1.2" fill="#b8b8b8" opacity="0.5"/><rect x="4.40" y="64.90" width="25.30" height="1.2" fill="#b8b8b8" opacity="0.5"/><rect x="4.40" y="67.03" width="36.30" height="1.2" fill="#b8b8b8" opacity="0.5"/><rect x="41.80" y="67.03" width="2.20" height="1.2" fill="#b8b8b8" opacity="0.5"/><rect x="4.40" y="71.29" width="1.10" height="1.2" fill="#6a9955" opacity="0.6"/><rect x="6.60" y="71.29" width="4.40" height="1.2" fill="#6a9955" opacity="0.6"/><rect x="12.10" y="71.29" width="2.20" height="1.2" fill="#6a9955" opacity="0.6"/><rect x="15.40" y="71.29" width="4.40" height="1.2" fill="#6a9955" opacity="0.6"/><rect x="4.40" y="73.42" width="35.20" height="1.2" fill="#b8b8b8" opacity="0.5"/><rect x="40.70" y="73.42" width="12.10" height="1.2" fill="#b8b8b8" opacity="0.5"/><rect x="4.40" y="75.55" width="25.30" height="1.2" fill="#b8b8b8" opacity="0.5"/><rect x="4.40" y="77.68" width="35.20" height="1.2" fill="#b8b8b8" opacity="0.5"/><rect x="40.70" y="77.68" width="2.20" height="1.2" fill="#b8b8b8" opacity="0.5"/><rect x="0.00" y="84.07" width="27.50" height="1.2" fill="#b8b8b8" opacity="0.5"/></svg>

  <div class="a" style="left:1097px;top:796px;width:762px;height:28px;background:#077acb;border-radius:0 0 8px 8px"></div>
  <div class="a mono" style="left:1116px;top:801px;font-size:12.95px;line-height:18px;color:#f4f8fc;-webkit-text-stroke:0.25px #f4f8fc">Cursor Pos: Ln 20, Col 2</div>
  <div class="a mono" style="left:1773px;top:801px;font-size:12.95px;line-height:18px;color:#f4f8fc;-webkit-text-stroke:0.25px #f4f8fc">Spaces: 4</div>
  <div class="a" style="left:1097px;top:824px;width:762px;height:1px;background:#3a2f2c"></div>

  <div class="a" style="left:1110.5px;top:840px;font-size:13.5px;line-height:16px;color:#9a9a9a;letter-spacing:0.1px">CONSOLE</div>
  <div class="a" style="left:1185px;top:835px;width:59px;height:26px;background:#0b78d4;border-radius:4px"></div>
  <div class="a" style="left:1194px;top:839px;font-size:14px;line-height:18px;color:#fff">Output</div>
  <div class="a" style="left:1797px;top:834px;width:50px;height:28px;border:1px solid #3c3c3c;border-radius:4px"></div>
  <div class="a" style="left:1806px;top:840px;font-size:13px;line-height:16px;color:#d0d0d0">Clear</div>
  <div class="a" style="left:1097px;top:870px;width:762px;height:1px;background:#2e2e2e"></div>
  <div class="a mono" style="left:1111px;top:879.5px;font-size:12.8px;line-height:18px;color:#d4d4d4">(no output yet)</div>

  <div class="a" style="left:1858px;top:66px;width:1px;height:941px;background:#6f7885"></div>
  <div class="a" style="left:1859px;top:66px;width:3px;height:944px;background:#cbd8ee"></div>
  <div class="a" style="left:50px;top:1008px;width:1812px;height:2px;background:#cbd8ee"></div>
  <!-- annotation -->
  <div class="a" style="left:1108px;top:743.5px;width:12.5px;height:12.5px;border-radius:50%;background:#e8130e"></div>
  <svg class="a" style="left:1100px;top:752px" width="80" height="172" viewBox="1100 752 80 172"><path d="M1114.3,756 L1124.3,773.5 L1104.3,773.5Z" fill="#ffe500"/><path d="M1114.5,772 V918.5 H1167" stroke="#ffe600" stroke-opacity="0.88" stroke-width="3" fill="none"/></svg>
  <div class="a" style="left:1166px;top:906px;width:207px;height:26px;background:#fff200"></div>
  <div class="a" style="left:1171.5px;top:910px;font-size:15px;line-height:18px;font-weight:700;color:#111;letter-spacing:-0.1px">Breakpoint added at line 19</div>
</div>
  <div class="a" style="left:46px;top:948px;width:371px;height:67px;background:#e94537"></div>
  <div class="a" style="left:155px;top:944.5px;font-size:58.8px;line-height:76px;font-weight:700;color:#fff;letter-spacing:0.5px">Alex</div>
</body></html>
